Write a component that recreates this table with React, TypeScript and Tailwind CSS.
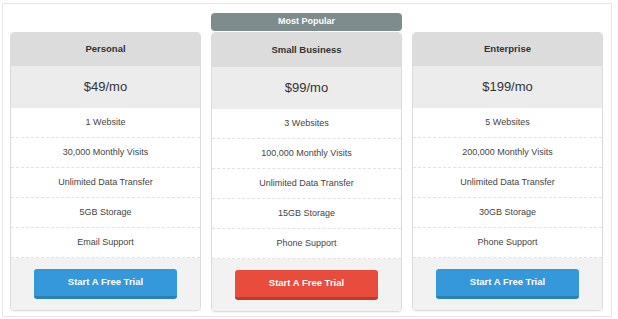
type Plan = {
  name: string;
  price: string;
  features: string[];
  featured?: boolean;
};

const plans: Plan[] = [
  {
    name: "Personal",
    price: "$49/mo",
    features: ["1 Website", "30,000 Monthly Visits", "Unlimited Data Transfer", "5GB Storage", "Email Support"]
  },
  {
    name: "Small Business",
    price: "$99/mo",
    featured: true,
    features: ["3 Websites", "100,000 Monthly Visits", "Unlimited Data Transfer", "15GB Storage", "Phone Support"]
  },
  {
    name: "Enterprise",
    price: "$199/mo",
    features: ["5 Websites", "200,000 Monthly Visits", "Unlimited Data Transfer", "30GB Storage", "Phone Support"]
  }
];

function PlanCard({ plan }: { plan: Plan }) {
  return (
    <div className={`w-[191px] shrink-0 ${plan.featured ? "" : "mt-[19px]"}`}>
      {plan.featured && (
        <div className="mb-[1px] flex h-[18px] items-center justify-center rounded-[4px] bg-[#7f8c8d] text-[9px] font-bold text-white">
          Most Popular
        </div>
      )}
      <div className="overflow-hidden rounded-[4px] border border-[#dcdcdc] shadow-[0_1px_1px_rgba(0,0,0,0.04)]">
        <div
          className={`flex items-center justify-center bg-[#dcdcdc] text-[9.5px] font-bold text-[#333] ${
            plan.featured ? "h-[34px]" : "h-[33px]"
          }`}
        >
          {plan.name}
        </div>
        <div className="flex h-[42px] items-center justify-center bg-[#ececec] text-[13px] text-[#333]">
          {plan.price}
        </div>
        <ul className="bg-white">
          {plan.features.map((feature) => (
            <li
              key={feature}
              className="flex h-[30px] items-center justify-center border-b border-dashed border-[#e2e2e2] text-[9px] text-[#444]"
            >
              {feature}
            </li>
          ))}
        </ul>
        <div className="flex justify-center bg-[#f2f2f2] py-[11px]">
          <button
            type="button"
            className={`h-[30px] w-[143px] rounded-[3px] border-b-[3px] text-[9.5px] font-bold text-white ${
              plan.featured ? "border-[#c0392b] bg-[#e74c3c]" : "border-[#2a80b9] bg-[#3498db]"
            }`}
          >
            Start A Free Trial
          </button>
        </div>
      </div>
    </div>
  );
}

export default function App() {
  return (
    <div className="h-[319px] w-[618px] bg-white pl-[2px] pt-[3px] font-['Liberation_Sans',Arial,sans-serif]">
      <div className="h-[314px] w-[610px] border border-[#e6e6e6] bg-white pl-[7px] pt-[9px]">
        <div className="flex items-start gap-[10px]">
          {plans.map((plan) => (
            <PlanCard key={plan.name} plan={plan} />
          ))}
        </div>
      </div>
    </div>
  );
}
